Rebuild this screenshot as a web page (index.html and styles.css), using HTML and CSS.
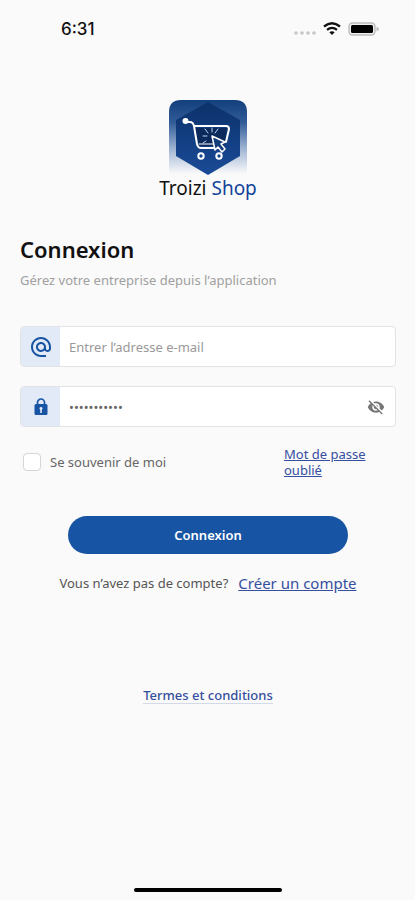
FILE: index.html
```html
<!DOCTYPE html>
<html lang="fr">
<head>
<meta charset="utf-8">
<meta name="viewport" content="width=device-width, initial-scale=1">
<title>Troizi Shop</title>
<link rel="stylesheet" href="styles.css">
</head>
<body>
<header class="status">
  <span class="time">6:31</span>
  <span class="indicators">
    <svg width="22" height="14" viewBox="0 0 22 14" fill="#c6c6c6"><circle cx="2" cy="11" r="1.8"/><circle cx="8" cy="11" r="1.8"/><circle cx="14" cy="11" r="1.8"/><circle cx="20" cy="11" r="1.8"/></svg>
    <svg width="18" height="14" viewBox="0 0 18 14" fill="none" stroke="#111" stroke-width="2.3"><path d="M1 4.500Q9-2 17 4.500M4 7.800Q9 4 14 7.800"/><path d="M6.300 10.300Q9 8.200 11.700 10.300L9 13Z" fill="#111" stroke="none"/></svg>
    <svg width="31" height="14" viewBox="0 0 31 14"><rect x="1" y="1" width="26" height="12" rx="3.5" fill="#eee" stroke="#bcbcbc" stroke-width="1.4"/><rect x="3" y="3" width="22" height="8" rx="1.5"/><path d="M28.5 4.5Q31 6 31 7T28.5 9.5Z" fill="#bcbcbc"/></svg>
  </span>
</header>
<main>
  <div class="brand">
    <svg width="78" height="76" viewBox="0 0 78 76" fill="none">
      <defs>
        <linearGradient id="tile" x1="0" y1="0" x2="0" y2="1"><stop offset="0" stop-color="#123f7d"/><stop offset=".3" stop-color="#315c98"/><stop offset=".65" stop-color="#9db3d2"/><stop offset="1" stop-color="#fafafa"/></linearGradient>
        <linearGradient id="hex" x1="0" y1="0" x2="0" y2="1"><stop offset="0" stop-color="#0e3269"/><stop offset=".5" stop-color="#123e82"/><stop offset="1" stop-color="#1b4b97"/></linearGradient>
      </defs>
      <path d="M0 74V12Q0 0 12 0H66Q78 0 78 12V74Z" fill="url(#tile)"/>
      <path d="M39 2L71 20V56L39 75L7 56V20Z" fill="url(#hex)"/>
      <path d="M26 28H58L55 46H30Z" fill="#0b2a5b"/>
      <circle cx="16.500" cy="21" r="3" fill="#fff"/>
      <g stroke="#fff" stroke-width="2" stroke-linecap="round" stroke-linejoin="round">
        <path d="M17 22H21Q24 22 25 26L28 44Q29 48 32 48H51M25 26H57Q60 26 60 29L57 42"/>
        <path d="M30 44H44" stroke-width="1"/>
        <circle cx="32" cy="56" r="2.700"/><circle cx="50" cy="56" r="2.700"/>
        <path d="M43 36L56 42L52 44L56 49L53 52L49 47L46 50Z" fill="#123c7c" stroke-width="1.500"/>
        <path d="M43 32V28M39 33L36 29M37 41L34 43M46 33L49 29M38 36H34" stroke="#b9d2f2" stroke-width="1"/>
      </g>
    </svg>
    <p class="name">Troizi <span>Shop</span></p>
  </div>
  <h1>Connexion</h1>
  <p class="lead">Gérez votre entreprise depuis l’application</p>
  <form>
    <div class="field">
      <label class="icon" for="email" aria-label="Adresse e-mail">
        <svg width="24" height="24" viewBox="0 0 24 24" fill="#1854a4"><path d="M12 2C6.480 2 2 6.480 2 12s4.480 10 10 10h5v-2h-5c-4.340 0-8-3.660-8-8s3.660-8 8-8 8 3.660 8 8v1.430c0 .79-.71 1.570-1.500 1.570s-1.500-.78-1.500-1.570V12c0-2.760-2.240-5-5-5s-5 2.240-5 5 2.240 5 5 5c1.380 0 2.640-.56 3.540-1.470.65.89 1.770 1.470 2.960 1.470 1.970 0 3.500-1.600 3.500-3.570V12c0-5.520-4.480-10-10-10zm0 13c-1.660 0-3-1.340-3-3s1.340-3 3-3 3 1.340 3 3-1.340 3-3 3z"/></svg>
      </label>
      <input type="email" id="email" placeholder="Entrer l’adresse e-mail">
    </div>
    <div class="field">
      <label class="icon" for="password" aria-label="Mot de passe">
        <svg width="14" height="17" viewBox="0 0 14 17"><path d="M3.500 7V4.500a3.500 3.500 0 0 1 7 0V7" fill="none" stroke="#1854a4" stroke-width="1.700"/><rect x=".5" y="6" width="13" height="11" rx="1.500" fill="#1854a4"/><path d="M7 9a1.500 1.500 0 0 1 .8 2.800V15H6.200v-3.200A1.500 1.500 0 0 1 7 9Z" fill="#e1eaf6"/></svg>
      </label>
      <input type="password" id="password" value="troizishop1">
      <button type="button" class="reveal" aria-label="Afficher le mot de passe">
        <svg width="18" height="18" viewBox="0 0 24 24" fill="#777"><path d="M12 7c2.760 0 5 2.240 5 5 0 .65-.13 1.260-.36 1.830l2.920 2.920c1.510-1.260 2.700-2.890 3.430-4.750-1.730-4.390-6-7.500-11-7.500-1.400 0-2.740.25-3.980.7l2.160 2.160C10.740 7.130 11.350 7 12 7zM2 4.270l2.280 2.280.46.46C3.080 8.300 1.780 10.020 1 12c1.730 4.390 6 7.500 11 7.500 1.550 0 3.030-.3 4.380-.84l.42.42L19.730 22 21 20.730 3.270 3 2 4.270zM7.530 9.800l1.550 1.550c-.05.21-.08.43-.08.65 0 1.660 1.340 3 3 3 .22 0 .44-.03.65-.08l1.550 1.550c-.67.33-1.410.53-2.200.53-2.760 0-5-2.240-5-5 0-.79.2-1.530.53-2.200zm4.310-.78l3.150 3.150.02-.16c0-1.660-1.340-3-3-3l-.17.01z"/></svg>
      </button>
    </div>
    <div class="options">
      <label class="remember"><input type="checkbox"><span>Se souvenir de moi</span></label>
      <a class="forgot" href="#">Mot de passe oublié</a>
    </div>
    <button class="submit" type="submit">Connexion</button>
  </form>
  <p class="signup"><span>Vous n’avez pas de compte?</span><a href="#">Créer un compte</a></p>
  <a class="terms" href="#">Termes et conditions</a>
</main>
<div class="home"></div>
</body>
</html>
```
FILE: styles.css
```css
* { box-sizing: border-box; }
body {
  margin: 0;
  min-height: 100vh;
  display: flex;
  flex-direction: column;
  background: #fafafa;
  color: #111;
  font-family: "Noto Sans", sans-serif;
  font-size: 13px;
  line-height: 16px;
}
svg { display: block; }
h1, p { margin: 0; }
a { color: #354f9e; }
input, button { font: inherit; }
.status {
  display: flex;
  justify-content: space-between;
  align-items: center;
  padding: 18px 36px 0 61px;
}
.time { font: 500 17px/22px Inter, sans-serif; }
.indicators { display: flex; gap: 7px; }
main {
  flex: 1;
  display: flex;
  flex-direction: column;
  padding: 60px 19px 0 20px;
}
.brand { display: flex; flex-direction: column; align-items: center; }
.name { font-size: 19px; line-height: 24px; }
.name span { color: #12439a; }
h1 { margin-top: 35px; font-size: 22px; line-height: 28px; font-weight: 600; }
.lead { margin-top: 9px; color: #a0a0a0; }
form { display: flex; flex-direction: column; margin-top: 38px; }
.field {
  display: flex;
  height: 41px;
  margin-bottom: 19px;
  overflow: hidden;
  border: 1px solid #e2e3e5;
  border-radius: 4px;
  background: #fff;
}
.icon {
  display: flex;
  align-items: center;
  justify-content: center;
  width: 39px;
  background: #e1eaf6;
}
.field input {
  flex: 1;
  min-width: 0;
  padding: 0 9px;
  border: 0;
  outline: 0;
  background: none;
  color: #666;
}
.field input::placeholder { color: #999; opacity: 1; }
.reveal { padding: 0 10px; border: 0; background: none; }
.options { display: flex; justify-content: space-between; align-items: center; }
.remember { display: flex; align-items: center; gap: 9px; padding-left: 3px; color: #666; }
.remember input {
  appearance: none;
  width: 18px;
  height: 18px;
  margin: 0;
  border: 1px solid #d5d5d5;
  border-radius: 4px;
  background: #fff;
}
.forgot { width: 112px; padding-right: 24px; }
.submit {
  height: 38px;
  margin: 38px 48px 0;
  border: 0;
  border-radius: 19px;
  background: #1854a4;
  color: #fff;
  font-weight: 600;
}
.signup {
  display: flex;
  justify-content: center;
  align-items: center;
  gap: 10px;
  margin-top: 21px;
  color: #555;
}
.signup a { font-size: 15px; }
.terms {
  align-self: center;
  margin-top: 96px;
  border-bottom: 1px solid #d3d9e9;
  font-weight: 500;
  text-decoration: none;
}
.home {
  align-self: center;
  width: 148px;
  height: 4px;
  margin-bottom: 8px;
  border-radius: 2px;
  background: #000;
}
```
